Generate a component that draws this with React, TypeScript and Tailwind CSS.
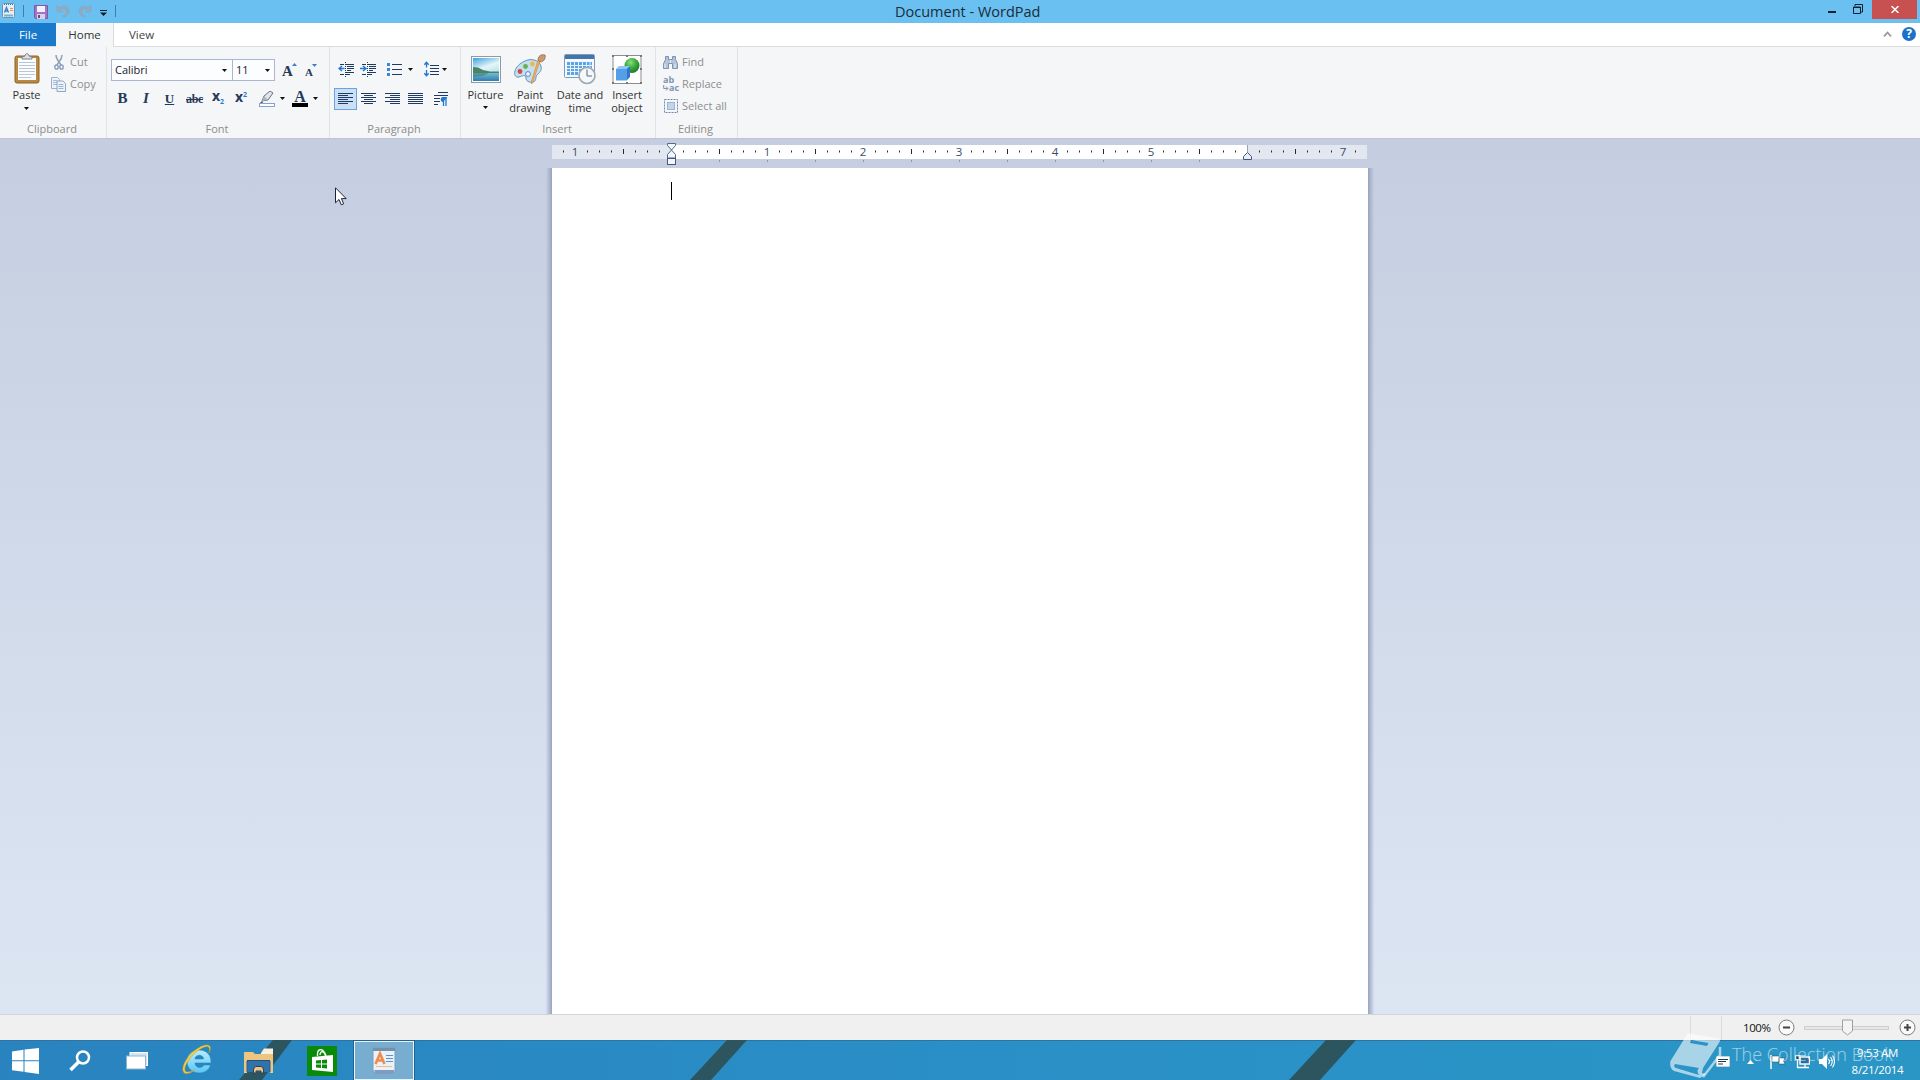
import React from 'react';
import clsx from 'clsx';

const NAVY = '#1f3b63';

const DownArrow = ({ className }: { className?: string }) => (
  <svg className={clsx('w-[5px] h-[3px] shrink-0', className)} viewBox="0 0 5 3">
    <path d="M0 0h5L2.5 3z" fill="#111" />
  </svg>
);

/* ---------- Title bar ---------- */

const AppIcon = () => (
  <svg className="w-[13px] h-[15px]" viewBox="0 0 13 15">
    <rect x=".5" y=".5" width="12" height="14" rx="1" fill="#e3eef6" stroke="#6b93b2" />
    <path d="M2 1.500h9" stroke="#54718c" strokeDasharray="1 1" />
    <path d="M2.500 9.500L4.500 4.500l2 5M3.100 8h2.800" stroke="#3a7fc4" strokeWidth="1.300" fill="none" />
    <path d="M8 5.500h3M8 7.500h3" stroke="#e09850" />
    <path d="M2 12.500h9" stroke="#86adca" strokeWidth="2" />
  </svg>
);

const SaveIcon = () => (
  <svg className="w-[14px] h-[14px]" viewBox="0 0 14 14">
    <path d="M.5.5h13v13h-12l-1-1z" fill="#9d77c6" stroke="#7f58a8" />
    <rect x="3" y="1" width="8" height="6" fill="#f4f0fa" />
    <rect x="3" y="9" width="8" height="5" fill="#d9d2e4" />
    <rect x="4" y="10" width="2" height="3" fill="#6d4797" />
  </svg>
);

const UndoIcon = ({ className }: { className?: string }) => (
  <svg className={clsx('w-[14px] h-[14px]', className)} viewBox="0 0 14 14">
    <path d="M1 1v7h6L4.800 5.600C7 3.800 10.200 4.600 10.200 7.400c0 2.100-1.400 3.600-3.700 4.800l1 1.300C11 12 13 10 13 7.200 13 2.200 7.400.4 3.200 3.600z" fill="#90abc0" stroke="#84a4bc" strokeWidth=".5" />
  </svg>
);

const TitleBar = () => (
  <header className="relative h-[23px] bg-[#69c0f1] flex items-start justify-between">
    <div className="flex items-start">
      <div className="pl-[2px] pt-[3px]"><AppIcon /></div>
      <div className="w-px h-[12px] mt-[5px] ml-[8px] bg-[#3f7fa6]" />
      <div className="ml-[10px] mt-[5px]"><SaveIcon /></div>
      <UndoIcon className="ml-[8px] mt-[4px]" />
      <UndoIcon className="ml-[8px] mt-[4px] -scale-x-100" />
      <svg className="w-[7px] h-[6px] ml-[8px] mt-[10px]" viewBox="0 0 7 6">
        <path d="M0 0h7v1H0zM0 2.500h7L3.500 6z" fill="#10202c" />
      </svg>
      <div className="w-px h-[12px] mt-[5px] ml-[8px] bg-[#3f7fa6]" />
    </div>
    <h1 className="absolute left-[895px] top-0 w-[145px] text-center whitespace-nowrap text-[14.5px] leading-[23px] text-[#1b2c38]">Document - WordPad</h1>
    <div className="flex items-start">
      <div className="w-[8px] h-[2px] mt-[11px] bg-[#10222e]" />
      <svg className="w-[10px] h-[10px] ml-[17px] mt-[4px]" viewBox="0 0 10 10">
        <path d="M2 2V.500h7.500V8H8" fill="none" stroke="#10222e" />
        <path d="M.5 3h7v6.500h-7zM.5 3.500h7" fill="none" stroke="#10222e" />
      </svg>
      <div className="w-[45px] h-[19px] ml-[9px] mr-[3px] bg-[#c75050] flex items-center justify-center">
        <svg className="w-[8px] h-[7px]" viewBox="0 0 8 7"><path d="M.5 0l7 7M7.500 0l-7 7" stroke="#fff" strokeWidth="1.500" /></svg>
      </div>
    </div>
  </header>
);

const TabStrip = () => (
  <nav className="h-[24px] bg-white border-b border-[#dadbdc] flex text-[11.5px] leading-[23px]">
    <div className="w-[56px] h-[23px] bg-[#1979ca] text-white text-center">File</div>
    <div className="w-[58px] h-[24px] bg-[#f5f6f7] border-r border-[#dadbdc] text-[#333] text-center">Home</div>
    <div className="w-[55px] text-[#444] text-center">View</div>
    <div className="ml-auto flex items-start pt-[3px] pr-[4px]">
      <svg className="w-[9px] h-[6px] mt-[5px] mr-[10px]" viewBox="0 0 9 6"><path d="M1 5.300l3.500-3.800L8 5.300" fill="none" stroke="#9a9a9a" strokeWidth="1.800" /></svg>
      <div className="w-[14px] h-[14px] mt-px rounded-full bg-[#1c72c8] text-white font-bold text-[12px] leading-[14px] text-center">?</div>
    </div>
  </nav>
);

/* ---------- Ribbon ---------- */

interface GroupProps {
  label: string;
  className: string;
  children: React.ReactNode;
}

const Group = ({ label, className, children }: GroupProps) => (
  <section className={clsx('h-[91px] flex flex-col shrink-0 border-r border-[#e2e3e4]', className)}>
    <div className="h-[74px] shrink-0">{children}</div>
    <div className="text-center text-[#8c8c8c] leading-[16px] h-[16px] pr-[2px]">{label}</div>
  </section>
);

const PasteIcon = () => (
  <svg className="w-[26px] h-[31px]" viewBox="0 0 26 31">
    <rect x="1" y="3" width="24" height="27" rx="2" fill="#b88740" stroke="#8c6428" />
    <path d="M4 5h18v22H4z" fill="#fbfcfe" />
    <path d="M5 9.500h16M5 12.500h16M5 15.500h16M5 18.500h16M5 21.500h16M5 24.500h12" stroke="#b9c5d8" />
    <path d="M8 6V4l3-1c0-3 4-3 4 0l3 1v2z" fill="#dde1e6" stroke="#7b8088" />
  </svg>
);

const ClipboardGroup = () => (
  <Group label="Clipboard" className="w-[107px]">
    <div className="flex">
      <div className="w-[53px] flex flex-col items-center pt-[6px]">
        <PasteIcon />
        <span className="leading-[14px] mt-[4px] text-[#333]">Paste</span>
        <DownArrow className="mt-[5px]" />
      </div>
      <div className="text-[#8e8e8e] leading-[22px] pt-[4px]">
        <div className="flex items-center h-[22px]">
          <svg className="w-[10px] h-[15px] ml-[1px] mr-[6px]" viewBox="0 0 10 15">
            <path d="M2 0c0 4 2 5.500 5 10M8 0c0 4-2 5.500-5 10" fill="none" stroke="#92a2b8" strokeWidth="1.500" />
            <ellipse cx="2.500" cy="12" rx="1.700" ry="2.200" fill="none" stroke="#8097b8" strokeWidth="1.300" />
            <ellipse cx="7.500" cy="12" rx="1.700" ry="2.200" fill="none" stroke="#8097b8" strokeWidth="1.300" />
          </svg>
          Cut
        </div>
        <div className="flex items-center h-[22px]">
          <svg className="w-[15px] h-[15px] -ml-[2px] mr-[4px]" viewBox="0 0 15 15">
            <path d="M.5.500h6l2 2v9h-8z" fill="#eef3fa" stroke="#9db1ce" />
            <path d="M2 3.500h4M2 5.500h4M2 7.500h4" stroke="#a8bcd8" />
            <path d="M6 4h6l2.500 2.500v8H6z" fill="#eef3fa" stroke="#8ea6c8" />
            <path d="M7.500 7.500h5M7.500 9.500h5M7.500 11.500h5" stroke="#9db4d4" />
          </svg>
          Copy
        </div>
      </div>
    </div>
  </Group>
);

const SERIF = 'font-["Liberation_Serif",serif] font-bold text-[#253a5a]';

const FontGroup = () => (
  <Group label="Font" className="w-[223px]">
    <div className="flex pt-[12px] pl-[4px] h-[34px] text-[#1a1a2e]">
      <div className="w-[122px] h-[22px] border border-[#abb5d4] bg-[#fcfdff] flex items-center justify-between pl-[3px] pr-[5px]">
        Calibri <DownArrow />
      </div>
      <div className="w-[42px] h-[22px] border border-l-0 border-[#abb5d4] bg-[#fcfdff] flex items-center justify-between pl-[3px] pr-[4px]">
        11 <DownArrow />
      </div>
      <div className={clsx('relative ml-[7px] w-[16px] text-[15px] leading-[24px]', SERIF)}>
        A
        <svg className="absolute left-[10px] top-[4px] w-[5px] h-[3px]" viewBox="0 0 5 3"><path d="M0 3h5L2.500 0z" fill="#3a7fc4" /></svg>
      </div>
      <div className={clsx('relative ml-[7px] w-[14px] text-[11px] leading-[26px]', SERIF)}>
        A
        <svg className="absolute left-[7px] top-[5px] w-[5px] h-[3px]" viewBox="0 0 5 3"><path d="M0 0h5L2.500 3z" fill="#3a7fc4" /></svg>
      </div>
    </div>
    <div className="flex items-center h-[34px] pt-[1px] pl-[3px]">
      <span className={clsx('w-[25px] text-center text-[15px]', SERIF)}>B</span>
      <span className={clsx('w-[22px] text-center text-[15px] italic', SERIF)}>I</span>
      <span className={clsx('w-[25px] text-center text-[13px] underline', SERIF)}>U</span>
      <span className={clsx('w-[25px] text-center text-[12px] line-through tracking-[-0.3px]', SERIF)}>abc</span>
      <span className="w-[22px] text-center text-[14px] leading-[12px] font-bold text-[#253a5a] pb-[3px] whitespace-nowrap">x<span className="text-[7px] text-[#2f79c8] relative top-[3px]">2</span></span>
      <span className="w-[24px] text-center text-[14px] leading-[12px] font-bold text-[#253a5a] whitespace-nowrap">x<span className="text-[7px] text-[#2f79c8] relative -top-[5px]">2</span></span>
      <svg className="w-[16px] h-[16px] ml-[6px]" viewBox="0 0 16 16">
        <path d="M3 10l2-5 6-5 3 2-5 7z" fill="#dfe5ea" stroke="#667480" />
        <path d="M3 10l2-5 4 4z" fill="#a8b4be" />
        <path d="M3 10l-2 2h3z" fill="#46525e" />
        <rect x=".5" y="12.500" width="15" height="3" fill="#fff" stroke="#8aa2cb" />
      </svg>
      <DownArrow className="ml-[5px]" />
      <div className={clsx('ml-[7px] w-[16px] h-[17px] text-center text-[16px] leading-[13px] border-b-[4px] border-black', SERIF)}>A</div>
      <DownArrow className="ml-[5px]" />
    </div>
  </Group>
);

interface LinesProps {
  d: string;
  className?: string;
}

const Lines = ({ d, className }: LinesProps) => (
  <svg className={clsx('w-[15px] h-[12px]', className)} viewBox="0 0 15 12">
    <path d={d} stroke={NAVY} fill="none" />
  </svg>
);

const IndentIcon = ({ right, className }: { right?: boolean; className?: string }) => (
  <svg className={clsx('w-[16px] h-[15px]', className)} viewBox="0 0 16 15">
    <path d="M2 2.500h4M8 2.500h8M9 4.500h7M9 6.500h7M9 8.500h4M8 10.500h8M2 12.500h4M8 12.500h4" stroke={NAVY} />
    <path d="M7.500 0v15" stroke={NAVY} strokeDasharray="1 1" />
    <path d={right ? 'M0 6.500h5M3 4l3 2.500L3 9' : 'M1.500 6.500h5M4 4L1 6.500 4 9'} fill="none" stroke="#1f78d1" strokeWidth="1.400" />
  </svg>
);

const ParagraphGroup = () => (
  <Group label="Paragraph" className="w-[131px]">
    <div className="flex items-center pt-[11px] pl-[8px] h-[33px]">
      <IndentIcon />
      <IndentIcon right className="ml-[6px]" />
      <svg className="w-[15px] h-[14px] ml-[11px]" viewBox="0 0 15 14">
        <path d="M5 2.500h10M5 7.500h10M5 12.500h10" stroke={NAVY} />
        <path d="M0 1h3v3H0zM0 6h3v3H0zM0 11h3v3H0z" fill="#3a86d4" />
      </svg>
      <DownArrow className="ml-[6px]" />
      <svg className="w-[15px] h-[16px] ml-[11px]" viewBox="0 0 15 16">
        <path d="M6 4.500h9M6 7.500h9M6 10.500h9M6 13.500h9" stroke={NAVY} />
        <path d="M2.500 1v5.500M2.500 9v6M.3 3.700l2.200-2.500 2.200 2.500M.3 12.300l2.200 2.500 2.200-2.500" fill="none" stroke="#1f78d1" strokeWidth="1.300" />
      </svg>
      <DownArrow className="ml-[3px]" />
    </div>
    <div className="flex items-center h-[22px] mt-[8px] pl-[4px]">
      <div className="w-[23px] h-[22px] bg-[#c9e0f7] border border-[#6ea2dc] flex items-center justify-center">
        <Lines d="M0 .5h15M0 2.500h10M0 4.500h15M0 6.500h10M0 8.500h15M0 10.500h10" />
      </div>
      <Lines className="ml-[4px]" d="M0 .5h15M3 2.500h9M0 4.500h15M3 6.500h9M0 8.500h15M3 10.500h9" />
      <Lines className="ml-[9px]" d="M0 .5h15M5 2.500h10M0 4.500h15M5 6.500h10M0 8.500h15M5 10.500h10" />
      <Lines className="ml-[8px]" d="M0 .5h15M0 2.500h15M0 4.500h15M0 6.500h15M0 8.500h15M0 10.500h15" />
      <svg className="w-[14px] h-[14px] ml-[11px]" viewBox="0 0 14 14">
        <path d="M4 .5h10M0 3.500h14M0 6.500h6M0 9.500h6M0 12.500h4" stroke={NAVY} />
        <path d="M9.500 5.500V14M12 5.500V14" stroke="#1f78d1" strokeWidth="1.300" />
        <path d="M13.500 5H9c-3 0-3 5 0 5z" fill="#1f78d1" />
      </svg>
    </div>
  </Group>
);

const PictureIcon = () => (
  <svg className="w-[30px] h-[27px]" viewBox="0 0 30 27">
    <defs>
      <linearGradient id="sky" x1="0" y1="0" x2=".4" y2="1">
        <stop offset="0" stopColor="#3d9fe0" />
        <stop offset=".5" stopColor="#e4f6f6" />
        <stop offset="1" stopColor="#a5d9e8" />
      </linearGradient>
      <linearGradient id="lake" x1="0" y1="0" x2="0" y2="1">
        <stop offset="0" stopColor="#7fc4d6" />
        <stop offset="1" stopColor="#2f7cae" />
      </linearGradient>
    </defs>
    <rect x=".5" y=".5" width="29" height="26" fill="#fff" stroke="#8a9bab" />
    <rect x="2" y="2" width="26" height="23" fill="url(#sky)" />
    <path d="M2 16h26v9H2z" fill="url(#lake)" />
    <path d="M2 11l5 .5 5 2.500 7 1.500 9 0v1.500H2z" fill="#4a8468" />
    <path d="M2 17l16 0-6 3-10 1z" fill="#3f7f7c" opacity=".6" />
  </svg>
);

const PaintIcon = () => (
  <svg className="w-[32px] h-[31px]" viewBox="0 0 32 31">
    <path d="M11 7C17 4 25 6 27 12c1 5-2 7-4 9s0 6-4 7c-4 .800-7-1-7-4 0-4-4-2-7-1-4 1-5-3-4-6 1-4 5-8 10-10z" fill="#c4dff2" stroke="#5f93bd" />
    <circle cx="11.500" cy="12.500" r="2.400" fill="#62b34a" />
    <circle cx="18.500" cy="10" r="2.400" fill="#f0b940" />
    <circle cx="6" cy="17.500" r="2.400" fill="#d64848" />
    <circle cx="14" cy="20" r="2.400" fill="#f3f8fd" stroke="#5686c0" />
    <path d="M26 7L18.500 29l-1 1v-3L24 6z" fill="#f0b160" stroke="#c98538" strokeWidth=".6" />
    <path d="M24 6c0-4 3-6 7-5 1 3-1 7-5 7z" fill="#c79a72" stroke="#8d6341" strokeWidth=".7" />
  </svg>
);

const CalendarIcon = () => (
  <svg className="w-[32px] h-[31px]" viewBox="0 0 32 31">
    <rect x=".5" y=".5" width="30" height="23" rx="1" fill="#f4f9ff" stroke="#7d9cbd" />
    <rect x="1" y="1" width="29" height="4" fill="#4475a8" />
    <path d="M3 8h25v13H3z" fill="#5aa3e4" />
    <path d="M3 11.500h25M3 14.500h25M3 17.500h25M6.500 7v15M10.500 7v15M14.500 7v15M18.500 7v15M22.500 7v15M26 7v15" stroke="#e4f1fd" />
    <circle cx="23" cy="21.500" r="8" fill="#f5f8fa" stroke="#a0a8b0" strokeWidth="1.600" />
    <path d="M23 15.500v6.500h5" fill="none" stroke="#5d6d7e" />
  </svg>
);

const ObjectIcon = () => (
  <svg className="w-[30px] h-[31px]" viewBox="0 0 30 31">
    <defs>
      <radialGradient id="ball" cx=".4" cy=".3" r=".7">
        <stop offset="0" stopColor="#8be07c" />
        <stop offset=".5" stopColor="#3fae3f" />
        <stop offset="1" stopColor="#1f7a2a" />
      </radialGradient>
    </defs>
    <rect x="1" y="1.500" width="28" height="28" fill="#fff" stroke="#8d8d8d" />
    <path d="M0 1h2v2H0zM14 1h2v2h-2zM28 1h2v2h-2zM0 14h2v2H0zM28 14h2v2h-2zM0 28h2v2H0zM14 28h2v2h-2zM28 28h2v2h-2z" fill="#777" />
    <circle cx="20" cy="11.500" r="7.500" fill="url(#ball)" />
    <path d="M4 15l3-3h11l-3 3z" fill="#8cc4f6" />
    <path d="M15 15l3-3v11l-3 3z" fill="#2f78c4" />
    <path d="M4 15h11v11.500H4z" fill="#559fe8" />
  </svg>
);

interface BigButtonProps {
  icon: React.ReactNode;
  lines: string[];
  arrow?: boolean;
  className: string;
}

const BigButton = ({ icon, lines, arrow, className }: BigButtonProps) => (
  <div className={clsx('flex flex-col items-center pt-[7px] whitespace-nowrap', className)}>
    <div className="h-[31px] flex items-center">{icon}</div>
    <div className="mt-[3px] leading-[13px] text-[#333] text-center">
      {lines.map((line) => (
        <div key={line}>{line}</div>
      ))}
    </div>
    {arrow && <DownArrow className="mt-[5px]" />}
  </div>
);

const InsertGroup = () => (
  <Group label="Insert" className="w-[195px]">
    <div className="flex">
      <BigButton className="w-[49px]" icon={<PictureIcon />} lines={['Picture']} arrow />
      <BigButton className="w-[40px]" icon={<PaintIcon />} lines={['Paint', 'drawing']} />
      <BigButton className="w-[60px]" icon={<CalendarIcon />} lines={['Date and', 'time']} />
      <BigButton className="w-[34px]" icon={<ObjectIcon />} lines={['Insert', 'object']} />
    </div>
  </Group>
);

const EditingGroup = () => (
  <Group label="Editing" className="w-[82px]">
    <div className="pt-[4px] pl-[7px] text-[#8e8e8e]">
      <div className="flex items-center h-[22px]">
        <svg className="w-[15px] h-[13px] mr-[4px]" viewBox="0 0 15 13">
          <path d="M2.500.500h3v3h4v-3h3v3l2 4v5h-5v-5h-4v5h-5v-5l2-4z" fill="#b5c3d8" stroke="#7d93b3" />
          <path d="M2 8v4M12 8v4M7.500 4v3" stroke="#e7edf6" />
        </svg>
        Find
      </div>
      <div className="flex items-center h-[22px]">
        <div className="relative w-[19px] h-[17px] text-[9px] font-bold leading-[8px] text-[#8195b4]">
          ab
          <div className="pl-[6px]">ac</div>
          <svg className="absolute left-0 top-[9px] w-[6px] h-[6px]" viewBox="0 0 6 6"><path d="M.7 0v3.500h4M3 1.500l2 2-2 2" fill="none" stroke="#7d93b3" /></svg>
        </div>
        Replace
      </div>
      <div className="flex items-center h-[22px]">
        <svg className="w-[14px] h-[14px] ml-[1px] mr-[4px]" viewBox="0 0 14 14">
          <rect x=".5" y=".5" width="13" height="13" fill="none" stroke="#7087aa" strokeDasharray="2 1" />
          <rect x="3.500" y="3.500" width="7" height="7" fill="#c3d3ea" stroke="#9db4d4" />
        </svg>
        Select all
      </div>
    </div>
  </Group>
);

/* ---------- Ruler and page ---------- */

// one tick each 1/8 inch, counted from the left margin
const TICKS = Array.from({ length: 67 }, (_, i) => i - 9);

const Ruler = () => (
  <div className="relative h-[14px] w-[815px] mt-[6px] ml-[552px] bg-[#e3e7f0] flex">
    <div className="w-[576px] h-[14px] ml-[119px] bg-white" />
    <svg className="absolute left-0 top-0 w-[815px] h-[18px]" viewBox="0 0 815 18">
      {TICKS.map((t) => {
        const x = 119 + t * 12;
        if (t === 0 || t === 48 || t % 8 === 0) return null;
        return t % 4 === 0
          ? <path key={t} d={`M${x + 0.5} 4v5`} stroke="#222b3c" />
          : <path key={t} d={`M${x + 0.5} 5.500v2`} stroke="#222b3c" />;
      })}
      {[4, 8, 12, 16, 20, 24, 28, 32, 36, 40, 44].map((t) => (
        <path key={t} d={`M${119.5 + t * 12} 15v2`} stroke="#8d98b4" />
      ))}
    </svg>
    {[
      ['1', 'left-[17px]'],
      ['1', 'left-[209px]'],
      ['2', 'left-[305px]'],
      ['3', 'left-[401px]'],
      ['4', 'left-[497px]'],
      ['5', 'left-[593px]'],
      ['7', 'left-[785px]'],
    ].map(([n, pos]) => (
      <span key={pos} className={clsx('absolute top-0 w-[12px] text-center leading-[13px] text-[11.5px] text-[#3c4a6b]', pos)}>{n}</span>
    ))}
    <svg className="absolute left-[114px] -top-[3px] w-[11px] h-[24px]" viewBox="0 0 11 24">
      <path d="M1.500 1.500h8v2l-4 4.500-4-4.500zM5.500 8l4 4.500V16h-8v-3.500z" fill="#f3f6fb" stroke="#54678c" />
      <rect x="1.500" y="16.500" width="8" height="6" fill="#f3f6fb" stroke="#44587e" />
    </svg>
    <svg className="absolute left-[690px] top-0 w-[11px] h-[16px]" viewBox="0 0 11 16">
      <path d="M5.500 0v7" stroke="#9aa3b8" />
      <path d="M5.500 7.500l4 4v3h-8v-3z" fill="#e9eef6" stroke="#44587e" />
    </svg>
  </div>
);

const Page = () => (
  <div className="flex-1 mt-[9px] flex ml-[546px]">
    <div className="w-[6px] bg-linear-to-r from-[#c0c9dd]/20 to-[#98a3c1]" />
    <div className="w-[816px] bg-white">
      <div className="w-px h-[18px] mt-[14px] ml-[119px] bg-black" />
    </div>
    <div className="w-[6px] bg-linear-to-r from-[#98a3c1] to-[#c0c9dd]/20" />
  </div>
);

const StatusBar = () => (
  <footer className="h-[26px] bg-[#f0f0f0] border-t border-[#d2d4d8] flex items-center justify-end text-[#222]">
    <div className="w-px h-[24px] bg-[#dcdcdc]" />
    <div className="w-px h-[24px] ml-[30px] bg-[#dcdcdc]" />
    <span className="w-[30px] ml-[21px] text-[11.5px] tracking-[-0.4px] text-[#111]">100%</span>
    <svg className="w-[17px] h-[17px] ml-[5px]" viewBox="0 0 17 17">
      <circle cx="8.500" cy="8.500" r="7.500" fill="#fafafa" stroke="#7c7c7c" />
      <path d="M5 8.500h7" stroke="#444" strokeWidth="2" />
    </svg>
    <div className="relative w-[85px] h-[4px] ml-[9px] border border-[#cfcfcf] bg-[#e6e6e6]">
      <svg className="absolute left-[37px] -top-[8px] w-[11px] h-[17px]" viewBox="0 0 11 17">
        <path d="M.5 1h10v11l-5 4-5-4z" fill="#f4f4f4" stroke="#a0a0a0" />
      </svg>
    </div>
    <svg className="w-[17px] h-[17px] ml-[10px] mr-[4px]" viewBox="0 0 17 17">
      <circle cx="8.500" cy="8.500" r="7.500" fill="#fafafa" stroke="#7c7c7c" />
      <path d="M5 8.500h7M8.500 5v7" stroke="#444" strokeWidth="2" />
    </svg>
  </footer>
);

/* ---------- Taskbar ---------- */

const Pinned = () => (
  <div className="relative flex items-center h-[39px]">
    <svg className="w-[27px] h-[26px] ml-[12px]" viewBox="0 0 27 26">
      <path d="M0 3.500l11.500-1.700v10.500H0zM12.500 1.600L27 0v12.300H12.500zM0 13.300h11.500v10.400L0 22.300zM12.500 13.300H27V26l-14.500-2.100z" fill="#fff" />
    </svg>
    <svg className="w-[22px] h-[22px] ml-[30px]" viewBox="0 0 22 22">
      <circle cx="14" cy="7.500" r="6" fill="none" stroke="#fff" strokeWidth="2.500" />
      <path d="M9.500 12l-8 8" stroke="#fff" strokeWidth="3.500" />
    </svg>
    <svg className="w-[22px] h-[18px] ml-[35px]" viewBox="0 0 22 18">
      <rect x="4" y=".5" width="17.500" height="13" fill="#d7e5ef" stroke="#fff" />
      <rect x=".5" y="4" width="19" height="13" fill="#fff" stroke="#8fb5d0" />
    </svg>
    <svg className="w-[30px] h-[31px] ml-[34px] -mt-[2px]" viewBox="0 0 30 31">
      <defs>
        <linearGradient id="ie" x1="0" y1="0" x2="0" y2="1">
          <stop offset="0" stopColor="#b9eefd" />
          <stop offset="1" stopColor="#5cc6f4" />
        </linearGradient>
      </defs>
      <path d="M29 19H13c0 5 7 6 9 2h6.500C27 26.500 22.500 29 17 29 10 29 5 24 5 17.500 5 10.500 10 6 17 6c7.500 0 12.500 5 12 13zM13 15h8.500c0-5-8.500-5-8.500 0z" fill="url(#ie)" fillRule="evenodd" stroke="#1e8cc8" strokeWidth=".6" />
      <path d="M27 9C31 1 26-1 18 3 8 8-2 22 1.500 28c2 3.500 8 .5 11.500-2-5 2-9 3-10 .5C1.500 22 9 11 17.500 5.500 25 1 29 1.500 27 9z" fill="#f2cf45" stroke="#c79a1c" strokeWidth=".5" />
    </svg>
    <svg className="w-[30px] h-[26px] ml-[32px] mt-px" viewBox="0 0 30 26">
      <path d="M17 5l3-4.500h9V7H17z" fill="#f7f1dd" />
      <path d="M0 4h9l2 2h18v19h-3V13H3v12H0z" fill="#ecc680" />
      <path d="M3 13h23v11H3z" fill="#2f73ac" />
      <path d="M3 12.500h23" stroke="#234e78" />
      <path d="M3 13v11M26 13v11" stroke="#2c5f8c" />
      <path d="M9.500 25v-4l2-2.500h6l2 2.500v4h-2.500v-2h-5v2z" fill="#ecc680" stroke="#2c4058" />
    </svg>
    <div className="w-[30px] h-[30px] ml-[33px] bg-[#0a8a0a] flex items-center justify-center">
      <svg className="w-[23px] h-[26px]" viewBox="0 0 23 26">
        <path d="M6.500 8V6c0-5 5-6 7-1l1 3M9 7c0-5 5-4 6 1" fill="none" stroke="#fff" strokeWidth="1.300" />
        <path d="M1 9l21-2v17L1 22z" fill="#fff" />
        <path d="M5 12.500l5-.5v3.500H5zM11 12l5-.5v4h-5zM5 16.500h5V20l-5-.5zM11 16.500h5v4l-5-.5z" fill="#0a8a0a" />
      </svg>
    </div>
    <div className="w-[60px] h-[39px] ml-[17px] bg-[#78add2] border border-[#e6f3fc] flex items-center justify-center outline-1 outline-[#24638e]">
      <svg className="w-[24px] h-[27px]" viewBox="0 0 24 27">
        <path d="M1 1h22v22c0 3-1 3.500-3 3.500H3L1 24z" fill="#eaf1f8" stroke="#7f9cb8" />
        <path d="M1 1h22v3H1z" fill="#7390ac" />
        <path d="M3.500 17L8 6.500 12.500 17M5 13.500h6" fill="none" stroke="#ee8d48" strokeWidth="2.600" />
        <path d="M14 8.500h7M14 11.500h7M14 14.500h7" stroke="#5795d0" />
        <path d="M4 19.500h16" stroke="#f0b98e" />
        <path d="M2 23h20v3H3z" fill="#7f9dbc" />
      </svg>
    </div>
  </div>
);

const Tray = () => (
  <div className="relative ml-auto flex items-center h-[39px] text-white">
    <svg className="w-[14px] h-[11px] mt-[2px]" viewBox="0 0 14 11">
      <rect width="14" height="11" fill="#fff" stroke="#1e4f70" strokeWidth=".5" />
      <path d="M2 3.500h10M2 5.500h8M2 8h5" stroke="#1d3c52" />
    </svg>
    <svg className="w-[7px] h-[4px] ml-[17px] mt-[2px]" viewBox="0 0 7 4"><path d="M0 4h7L3.500 0z" fill="#fff" /></svg>
    <svg className="w-[16px] h-[14px] ml-[16px] mt-[2px]" viewBox="0 0 16 14">
      <path d="M1 0v14" stroke="#fff" strokeWidth="1.500" />
      <path d="M2 1h7v6H2zM9 3h6l-1.500 3L15 9H9z" fill="#fff" stroke="#24465c" strokeWidth=".5" />
    </svg>
    <svg className="w-[15px] h-[14px] ml-[9px] mt-[2px]" viewBox="0 0 15 14">
      <rect x="5" y="2" width="9.500" height="7" fill="#2c6f98" stroke="#fff" strokeWidth="1.400" />
      <path d="M10 9v3M6 12.500h8M2.500 5v7.500H7" stroke="#fff" strokeWidth="1.300" fill="none" />
      <rect x=".7" y=".7" width="4" height="4" fill="#24465c" stroke="#fff" />
    </svg>
    <svg className="w-[16px] h-[15px] ml-[9px] mt-[2px]" viewBox="0 0 16 15">
      <path d="M0 5h3l5-5v15l-5-5H0z" fill="#fff" />
      <path d="M9.500 5q2 2.500 0 5M11.500 3q3.500 4.500 0 9M13.500 1.500q4 6 0 12" fill="none" stroke="#fff" strokeWidth="1.100" />
    </svg>
    <div className="w-[85px] text-center text-[11.5px] leading-[17px] tracking-[-0.3px] pt-px">
      <div>9:53 AM</div>
      <div>8/21/2014</div>
    </div>
  </div>
);

const Watermark = () => (
  <div className="absolute left-[1670px] top-[1032px] flex pointer-events-none">
    <svg className="w-[52px] h-[48px]" viewBox="0 0 52 48">
      <path fillRule="evenodd" d="M17 2.500Q18 1 20 1.500L48 6.500Q51 7 49.500 10L33 36l-1 5 4 1-6 4L4 39Q-1 36 .5 29zM5 32q-2 3 1 4l23 7q-3-4 0-7zM21 8l-1 3 17 3 1.500-3z" fill="#fff" fillOpacity=".6" />
      <path d="M50 15v8L33 45" fill="none" stroke="#fff" strokeOpacity=".6" strokeWidth="2.500" />
    </svg>
    <span className="ml-[10px] mt-[11px] text-[18px] leading-[22px] tracking-[0.05px] font-light whitespace-nowrap text-white/55">The Collection Book</span>
  </div>
);

const Taskbar = () => (
  <div className="relative h-[40px] flex bg-linear-to-r from-[#2983bf] via-[#2a8fc6] to-[#2a96c6] border-t border-[#2b74a4] shrink-0">
    <svg className="absolute left-0 -top-px w-[1920px] h-[40px]" viewBox="0 0 1920 40">
      <path d="M273 0h19l-30 40h-23zM727 0h20l-36 40h-21zM1326 0h30l-36 40h-31z" fill="#2c5560" />
    </svg>
    <Pinned />
    <Tray />
  </div>
);

export default function App() {
  return (
    <div className='relative w-[1920px] h-[1080px] overflow-hidden flex flex-col font-["Open_Sans","Noto_Sans",sans-serif] text-[11px]'>
      <TitleBar />
      <TabStrip />
      <div className="h-[91px] bg-[#f5f6f7] flex">
        <ClipboardGroup />
        <FontGroup />
        <ParagraphGroup />
        <InsertGroup />
        <EditingGroup />
      </div>
      <main className="flex-1 min-h-0 flex flex-col border-t border-[#bcc5d8] bg-linear-to-b from-[#c5cee0] to-[#dce6f3]">
        <Ruler />
        <Page />
      </main>
      <StatusBar />
      <Taskbar />
      <Watermark />
      {/* mouse pointer */}
      <svg className="absolute left-[335px] top-[187px] w-[12px] h-[19px]" viewBox="0 0 12 19">
        <path d="M.5.8v15l3.500-3.300 2.300 5.300 2.400-1-2.300-5.200h4.800z" fill="#fff" stroke="#1c2438" />
      </svg>
    </div>
  );
}
